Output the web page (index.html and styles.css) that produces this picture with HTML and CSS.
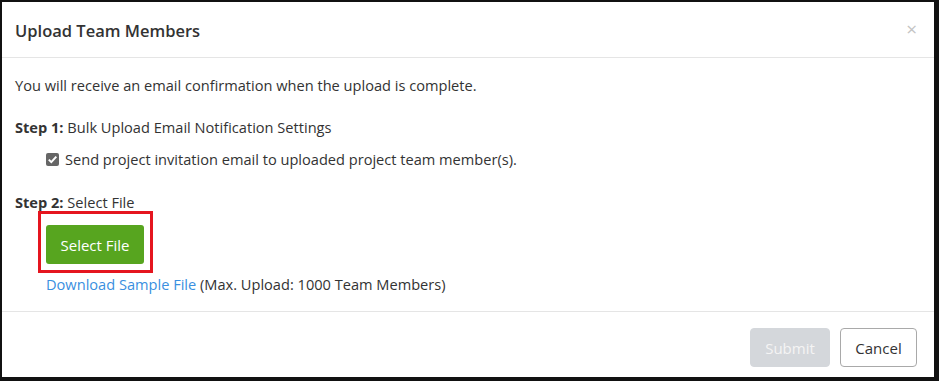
FILE: index.html
```html
<!DOCTYPE html>
<html lang="en">
<head>
    <meta charset="UTF-8">
    <title>Upload Team Members</title>
    <link rel="stylesheet" href="styles.css">
</head>
<body>
    <div class="modal">
        <div class="modal-header">
            <h4>Upload Team Members</h4>
            <button class="close-btn" aria-label="Close">&times;</button>
        </div>

        <div class="modal-body">
            <p class="intro">You will receive an email confirmation when the upload is complete.</p>

            <div class="step step-one">
                <div class="step-title"><strong>Step 1:</strong> Bulk Upload Email Notification Settings</div>
                <label class="check-row">
                    <span class="checkbox">
                        <svg width="11" height="11" viewBox="0 0 11 11">
                            <path d="M1.8 5.6 L4.3 8.1 L9.3 2.6" fill="none" stroke="#fff" stroke-width="2"/>
                        </svg>
                    </span>
                    Send project invitation email to uploaded project team member(s).
                </label>
            </div>

            <div class="step step-two">
                <div class="step-title"><strong>Step 2:</strong> Select File</div>
                <div class="highlight">
                    <button class="select-btn">Select File</button>
                </div>
                <div class="download-row">
                    <a href="#" class="link">Download Sample File</a> (Max. Upload: 1000 Team Members)
                </div>
            </div>
        </div>

        <div class="modal-footer">
            <button class="submit-btn" disabled>Submit</button>
            <button class="cancel-btn">Cancel</button>
        </div>
    </div>
</body>
</html>
```

FILE: styles.css
```css
body {
    margin: 0;
    padding: 0;
    font-family: 'Open Sans', sans-serif;
    color: #333;
    background: #fff;
}

.modal {
    width: 932px;
    height: 375px;
    border-style: solid;
    border-color: #111;
    border-width: 2px 5px 4px 2px;
    background: #fff;
    display: flex;
    flex-direction: column;
}

.modal-header {
    display: flex;
    justify-content: space-between;
    align-items: center;
    height: 55px;
    padding: 0 15px 0 13px;
    border-bottom: 1px solid #e5e5e5;
}

.modal-header h4 {
    margin: 0;
    padding-top: 2px;
    font-size: 16.5px;
    font-weight: 600;
    color: #333;
}

.close-btn {
    background: none;
    border: none;
    padding: 0 2px 0 0;
    font-family: 'Open Sans', sans-serif;
    font-size: 19px;
    line-height: 1;
    color: #c4c4c4;
    cursor: pointer;
}

.modal-body {
    padding: 16px 13px 0;
    font-size: 14.6px;
    border-bottom: 1px solid #e5e5e5;
}

.intro {
    margin: 0 0 20px;
    line-height: 22px;
}

.step-one {
    margin-bottom: 21px;
}

.step-two {
    margin-bottom: 16px;
}

.step-title {
    line-height: 22px;
}

.step-title strong {
    font-weight: 700;
}

.check-row {
    display: flex;
    align-items: center;
    gap: 6px;
    margin: 10px 0 0 31px;
    line-height: 22px;
}

.checkbox {
    width: 13px;
    height: 13px;
    border-radius: 2px;
    background: #666;
    display: flex;
    align-items: center;
    justify-content: center;
}

.highlight {
    display: inline-block;
    margin: -2px 0 0 23px;
    padding: 11px 6px 6px 5px;
    border: 3px solid #e5151f;
}

.select-btn {
    display: block;
    width: 98px;
    height: 39px;
    background: #57a51f;
    color: #fff;
    border: none;
    border-radius: 3px;
    font-family: 'Open Sans', sans-serif;
    font-size: 15px;
    cursor: pointer;
}

.download-row {
    margin: 0 0 0 31px;
    line-height: 22px;
}

.link {
    color: #3a8fe0;
    text-decoration: none;
}

.modal-footer {
    flex: 1;
    display: flex;
    justify-content: flex-end;
    align-items: flex-start;
    gap: 10px;
    padding: 16px 17px 0;
}

.submit-btn, .cancel-btn {
    height: 39px;
    padding: 0 14px;
    font-family: 'Open Sans', sans-serif;
    font-size: 15px;
    border-radius: 4px;
    cursor: pointer;
}

.submit-btn {
    width: 80px;
    background: #d4d7db;
    color: #f4f4f4;
    border: 1px solid #d4d7db;
}

.cancel-btn {
    width: 77px;
    background: #fff;
    color: #333;
    border: 1px solid #a9a9a9;
}
```
